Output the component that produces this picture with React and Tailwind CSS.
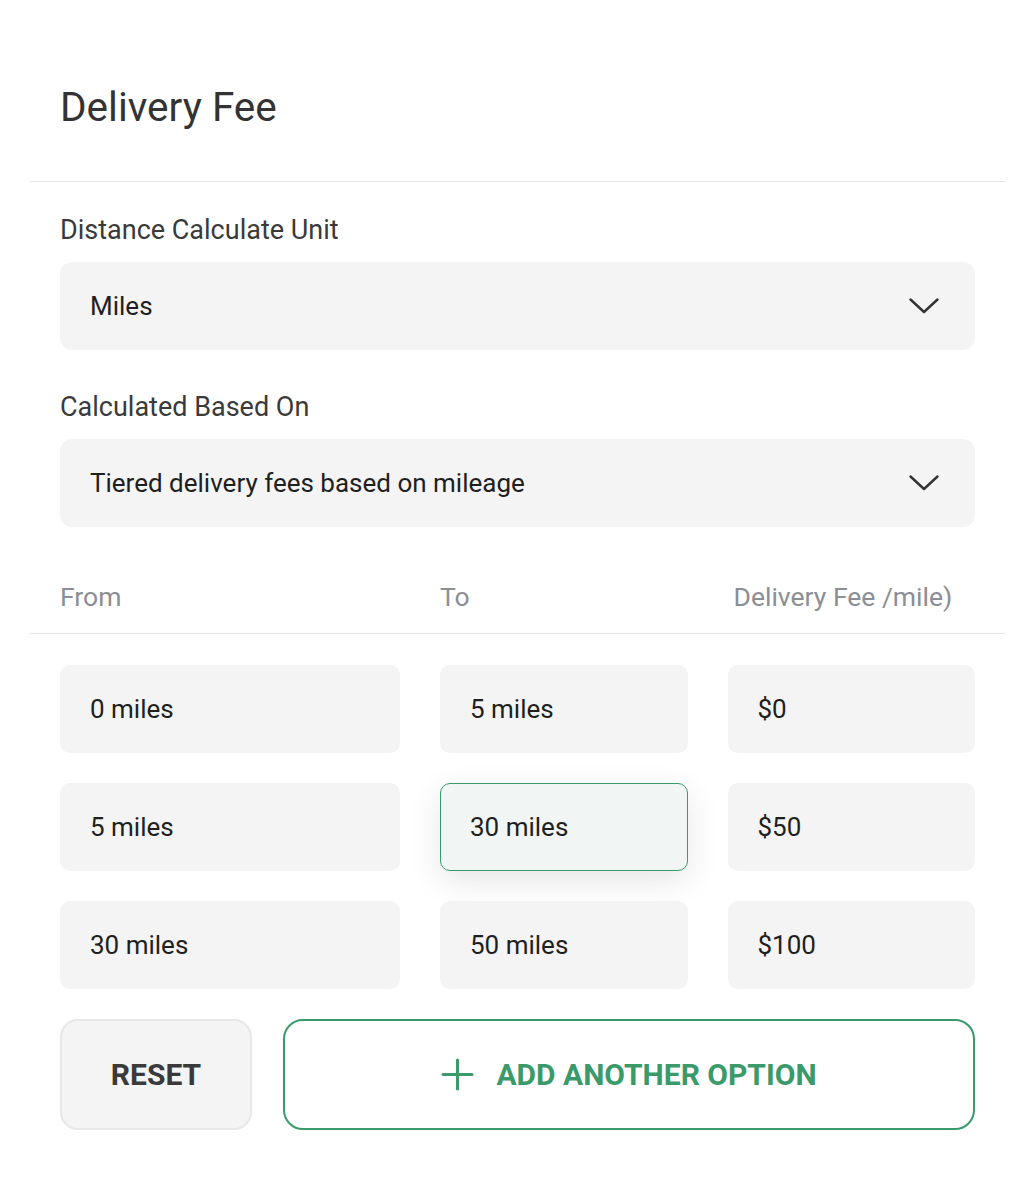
import React from "react";

const font = { fontFamily: "Roboto, 'Liberation Sans', sans-serif" };

const Chevron = () => (
  <svg width="30" height="16" viewBox="0 0 30 16" fill="none" className="shrink-0">
    <path d="M1.5 1.5 L15 14 L28.5 1.5" stroke="#333" strokeWidth="2.4" strokeLinecap="round" strokeLinejoin="round" />
  </svg>
);

const Select = ({ value }) => (
  <div className="h-[88px] rounded-[12px] bg-[#f4f4f4] pl-[30px] pr-[36px] flex items-center justify-between">
    <span className="text-[26px] text-[#1f1f1f]">{value}</span>
    <Chevron />
  </div>
);

const Cell = ({ value, active }) =>
  active ? (
    <div className="h-[88px] rounded-[10px] bg-[#f1f5f3] border border-[#3b9a6a] shadow-[0_10px_32px_rgba(0,0,0,0.10)] pl-[29px] flex items-center">
      <span className="text-[26px] text-[#1f1f1f]">{value}</span>
    </div>
  ) : (
    <div className="h-[88px] rounded-[10px] bg-[#f4f4f4] pl-[30px] flex items-center">
      <span className="text-[26px] text-[#1f1f1f]">{value}</span>
    </div>
  );

const rows = [
  ["0 miles", "5 miles", "$0"],
  ["5 miles", "30 miles", "$50"],
  ["30 miles", "50 miles", "$100"],
];

export default function App() {
  return (
    <div className="bg-white min-h-[1191px] px-[30px]" style={font}>
      <div className="px-[30px] pt-[81px] pb-[48px] border-b border-[#e6e6e6]">
        <h1 className="text-[40.5px] leading-[52px] text-[#333]">Delivery Fee</h1>
      </div>

      <div className="px-[30px] pt-[32px]">
        <label className="block text-[27px] leading-[32px] text-[#3a3a3a] mb-[16px]">Distance Calculate Unit</label>
        <Select value="Miles" />

        <label className="block text-[27px] leading-[32px] text-[#3a3a3a] mt-[41px] mb-[16px]">Calculated Based On</label>
        <Select value="Tiered delivery fees based on mileage" />
      </div>

      <div className="px-[30px] pt-[54px] pb-[20px] border-b border-[#e6e6e6] grid grid-cols-[340px_1fr_1fr] gap-x-10 text-[26.5px] leading-[32px] text-[#8b8e94]">
        <span>From</span>
        <span>To</span>
        <span className="ml-[6px]">Delivery Fee /mile)</span>
      </div>

      <div className="px-[30px] pt-[31px] grid grid-cols-[340px_1fr_1fr] gap-x-10 gap-y-[30px]">
        {rows.map((r, i) =>
          r.map((v, j) => <Cell key={i + "-" + j} value={v} active={i === 1 && j === 1} />)
        )}
      </div>

      <div className="px-[30px] pt-[30px] flex gap-[31px]">
        <button className="w-[192px] h-[111px] rounded-[18px] bg-[#f4f4f4] border-2 border-[#e8e8e8] text-[30px] font-bold text-[#3a3a3a]">
          RESET
        </button>
        <button className="flex-1 h-[111px] rounded-[20px] bg-white border-2 border-[#3b9a6a] flex items-center justify-center gap-[22px] text-[30px] font-bold text-[#3b9a6a]">
          <svg width="33" height="33" viewBox="0 0 33 33" fill="none">
            <path d="M16.5 2 V31 M2 16.5 H31" stroke="#3b9a6a" strokeWidth="3" strokeLinecap="round" />
          </svg>
          <span>ADD ANOTHER OPTION</span>
        </button>
      </div>
    </div>
  );
}
